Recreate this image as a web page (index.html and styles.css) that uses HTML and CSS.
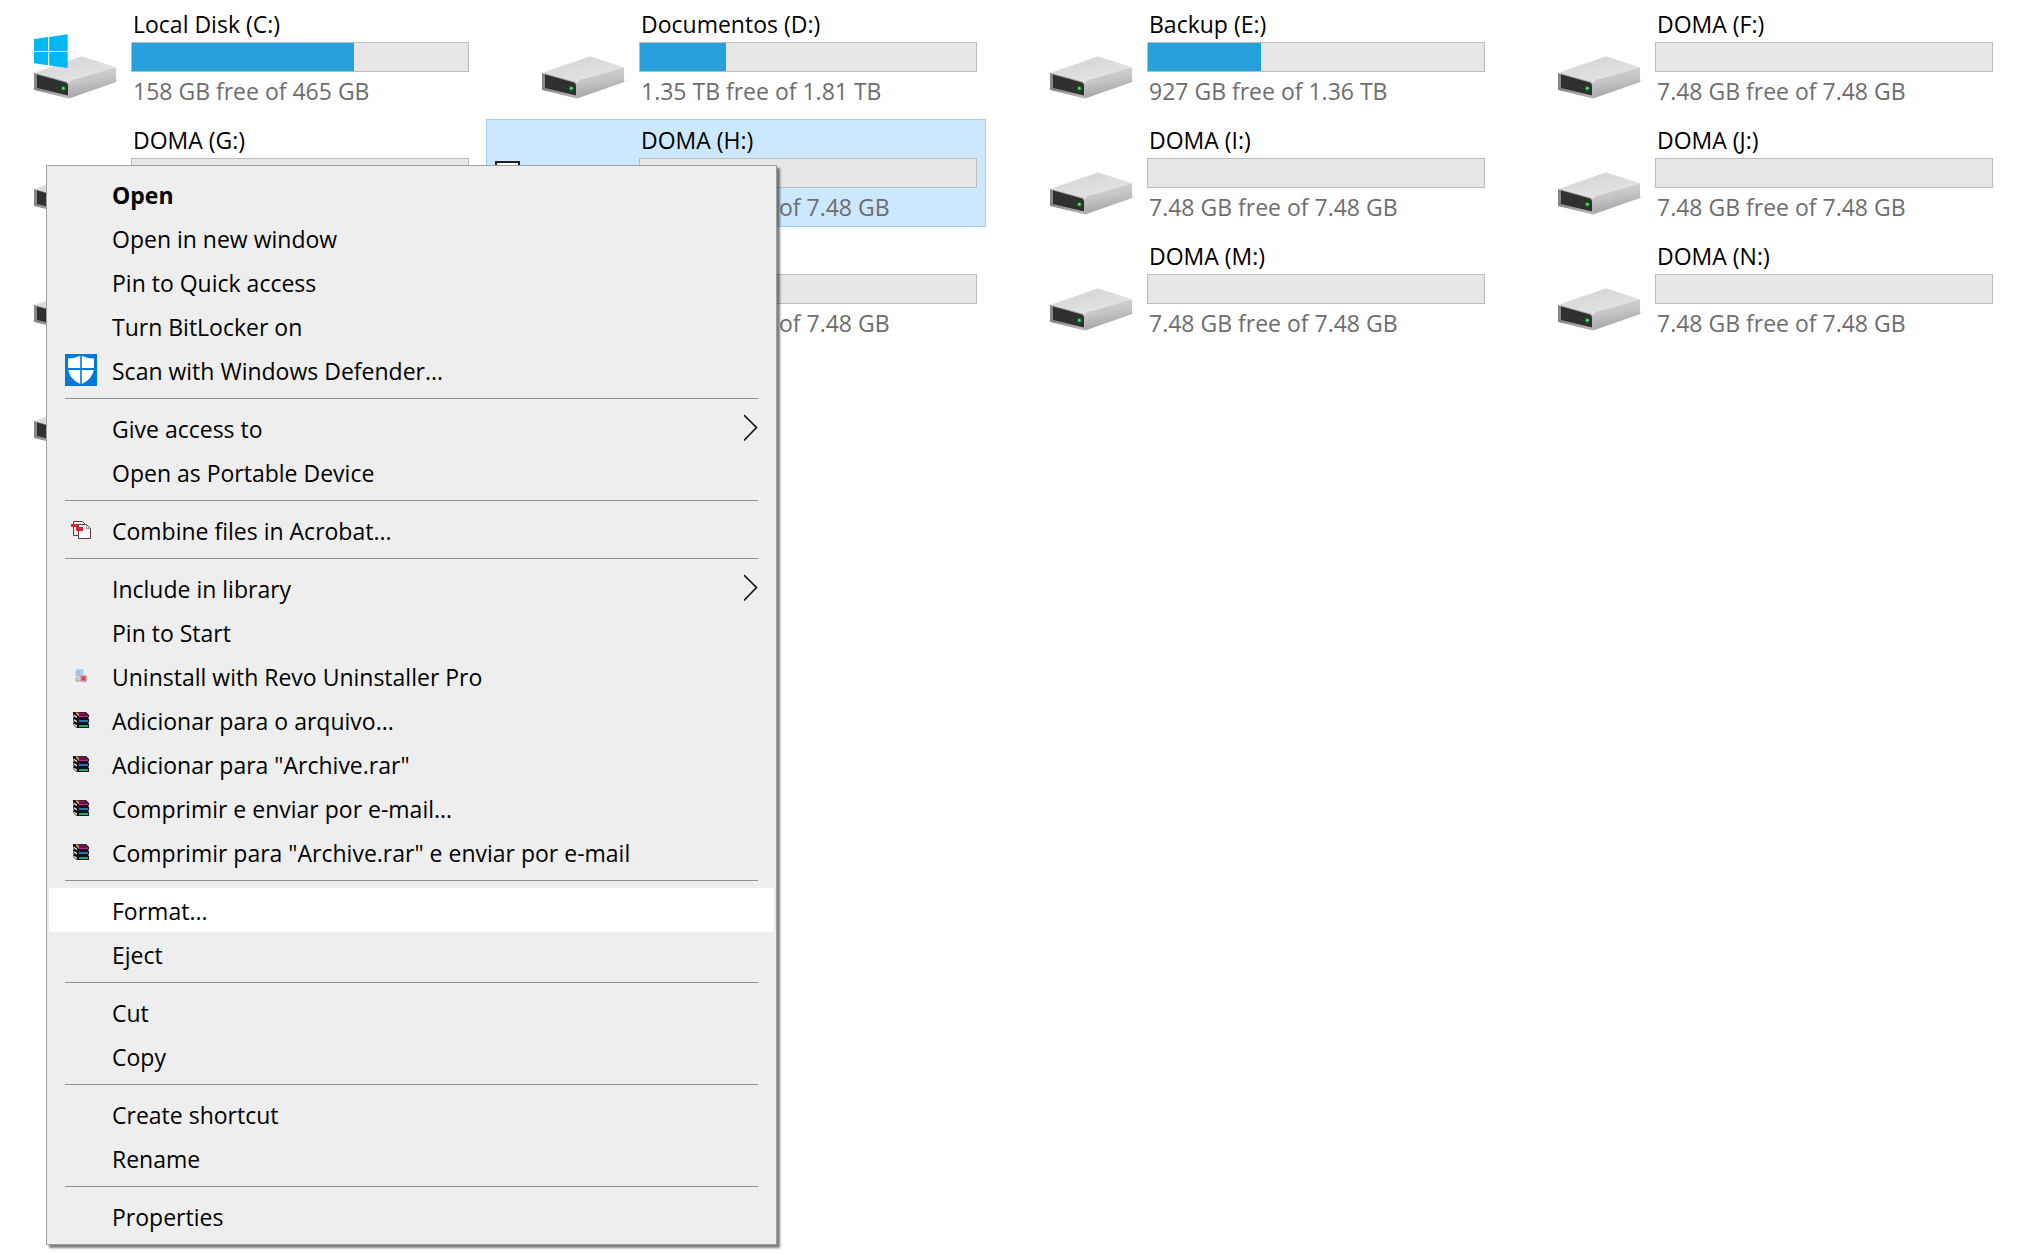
FILE: index.html
```html
<!DOCTYPE html>
<html lang="en">
<head>
<meta charset="utf-8">
<title>This PC</title>
<link rel="stylesheet" href="styles.css">
</head>
<body>
<svg class="defs" aria-hidden="true">
  <defs>
    <linearGradient id="top-face" x1="0" y1="0" x2="0.6" y2="1">
      <stop offset="0" stop-color="#d2d2d5"/><stop offset="1" stop-color="#e6e6e9"/>
    </linearGradient>
    <linearGradient id="side-face" x1="0" y1="0" x2="0.25" y2="1">
      <stop offset="0" stop-color="#dadadd"/><stop offset="0.5" stop-color="#c4c4c7"/><stop offset="1" stop-color="#a3a3a6"/>
    </linearGradient>
    <linearGradient id="front-face" x1="0" y1="0" x2="1" y2="0">
      <stop offset="0" stop-color="#858585"/><stop offset="1" stop-color="#b9b9bb"/>
    </linearGradient>
    <symbol id="drive" viewBox="0 0 88 88">
      <path d="M38 85 84 69 88 68 84 66z" fill="#ececec"/>
      <path d="M2 60 48 44q2-1 4 0l31 10q1 1 1 2L40 73 36 69z" fill="url(#top-face)"/>
      <path d="M37 70Q39 66 44 66L84 54.500V69L37 85.500z" fill="url(#side-face)"/>
      <path d="M2 60 35 68.500q2 1 2 3V85.500L2 77z" fill="url(#front-face)"/>
      <path d="M5 61.500 34 69.500q2 1 2 3V82.500L5 75z" fill="#303030"/>
      <circle cx="31.300" cy="75.300" r="2.600" fill="#176c22"/>
      <circle cx="31.300" cy="75.300" r="1.300" fill="#5cf06c"/>
    </symbol>
    <symbol id="windows" viewBox="0 0 88 88">
      <path fill="#00b8f1" d="M2 26 16.100 24V37.900H2zM17.200 23.900 35.700 21.300V37.900H17.200zM2 38.900H16.100V52.300L2 50.300zM17.200 38.900H35.700V55L17.200 52.400z"/>
    </symbol>
    <symbol id="defender" viewBox="0 0 32 32">
      <path fill="#0078d7" d="M0 0h32v32H0z"/>
      <path fill="#fff" d="M3 4.500Q10 4.500 15.200 1.800V14H3zM16.800 1.800Q22 4.500 29 4.500V14H16.800zM3.200 16H15.200V30Q5 25.500 3.200 16zM16.800 16H28.800Q27 25.500 16.800 30z"/>
    </symbol>
    <symbol id="combine" viewBox="0 0 32 32">
      <path d="M8.500 7.500h9l3 3V21.500h-12z" fill="#f4f0f0" stroke="#553e40"/>
      <path d="M13.500 10.500h8l4 4V24.500h-12z" fill="#faf8f8" stroke="#553e40"/>
      <path d="M21.500 10.500v4h4" fill="none" stroke="#9a8a8a"/>
      <path d="M6 10h7v3H6zM11 13h7v4h-7z" fill="#d9252e"/>
    </symbol>
    <symbol id="revo" viewBox="0 0 32 32">
      <path d="M10 13h7l1 8-7 1z" fill="#c9d3d6"/>
      <path d="M11 9h7l1 4-8 3z" fill="#b3caf2"/>
      <path d="M10 12h5M12 15h6" stroke="#8fa9e4"/>
      <path d="M11 18v3h5" fill="none" stroke="#a0a8a4"/>
      <circle cx="18.500" cy="18.500" r="3.800" fill="#dda0a4"/>
      <path d="m16.500 16.500 4 4m0-4-4 4" stroke="#c93540" stroke-width="1.500"/>
    </symbol>
    <symbol id="rar" viewBox="0 0 32 32">
      <path d="M8 8h13l3 3v2l-1 1 1 1v3l-1 1 1 1v4H12l-4-3v-2l1-1-1-1v-3l1-1-1-1z" fill="#16101a"/>
      <path d="M11 8.500h9l2 2h-9z" fill="#8e1c50"/>
      <path d="M14 11.500h9v1.500h-9z" fill="#d2218d"/>
      <path d="M14 16h9v2h-9z" fill="#2473ae"/>
      <path d="M14 21h9v2h-9z" fill="#16a673"/>
      <path d="M8.500 10.500l3.500 2v1.500l-3.500-2zM8.500 15l3.500 2v1.500l-3.500-2zM8.500 19.500l3.500 2v1.500l-3.500-2z" fill="#f3ead8"/>
      <path d="M10.500 8.500h2l1.500 2v2l-2-1.500z" fill="#d9a25a"/>
    </symbol>
    <symbol id="chevron" viewBox="0 0 14 28">
      <path d="M0 1 12.500 13.500 0 26.500" fill="none" stroke="#111" stroke-width="1.600"/>
    </symbol>
  </defs>
</svg>

<main>
  <ul class="drives">
    <li class="drive">
      <svg class="drive-icon" aria-hidden="true"><use href="#drive"/><use href="#windows"/></svg>
      <div class="info"><span class="name">Local Disk (C:)</span><progress class="usage" aria-label="Space used on C:" max="100" value="66"></progress><span class="free">158 GB free of 465 GB</span></div>
    </li>
    <li class="drive">
      <svg class="drive-icon" aria-hidden="true"><use href="#drive"/></svg>
      <div class="info"><span class="name">Documentos (D:)</span><progress class="usage" aria-label="Space used on D:" max="1000" value="255"></progress><span class="free">1.35 TB free of 1.81 TB</span></div>
    </li>
    <li class="drive">
      <svg class="drive-icon" aria-hidden="true"><use href="#drive"/></svg>
      <div class="info"><span class="name">Backup (E:)</span><progress class="usage" aria-label="Space used on E:" max="1000" value="335"></progress><span class="free">927 GB free of 1.36 TB</span></div>
    </li>
    <li class="drive">
      <svg class="drive-icon" aria-hidden="true"><use href="#drive"/></svg>
      <div class="info"><span class="name">DOMA (F:)</span><progress class="usage" aria-label="Space used on F:" max="100" value="0"></progress><span class="free">7.48 GB free of 7.48 GB</span></div>
    </li>
    <li class="drive">
      <svg class="drive-icon" aria-hidden="true"><use href="#drive"/></svg>
      <div class="info"><span class="name">DOMA (G:)</span><progress class="usage" aria-label="Space used on G:" max="100" value="0"></progress><span class="free">7.48 GB free of 7.48 GB</span></div>
    </li>
    <li class="drive selected">
      <input class="check" type="checkbox" aria-label="Select DOMA (H:)" checked>
      <svg class="drive-icon" aria-hidden="true"><use href="#drive"/></svg>
      <div class="info"><span class="name">DOMA (H:)</span><progress class="usage" aria-label="Space used on H:" max="100" value="0"></progress><span class="free">7.48 GB free of 7.48 GB</span></div>
    </li>
    <li class="drive">
      <svg class="drive-icon" aria-hidden="true"><use href="#drive"/></svg>
      <div class="info"><span class="name">DOMA (I:)</span><progress class="usage" aria-label="Space used on I:" max="100" value="0"></progress><span class="free">7.48 GB free of 7.48 GB</span></div>
    </li>
    <li class="drive">
      <svg class="drive-icon" aria-hidden="true"><use href="#drive"/></svg>
      <div class="info"><span class="name">DOMA (J:)</span><progress class="usage" aria-label="Space used on J:" max="100" value="0"></progress><span class="free">7.48 GB free of 7.48 GB</span></div>
    </li>
    <li class="drive">
      <svg class="drive-icon" aria-hidden="true"><use href="#drive"/></svg>
      <div class="info"><span class="name">DOMA (K:)</span><progress class="usage" aria-label="Space used on K:" max="100" value="0"></progress><span class="free">7.48 GB free of 7.48 GB</span></div>
    </li>
    <li class="drive">
      <svg class="drive-icon" aria-hidden="true"><use href="#drive"/></svg>
      <div class="info"><span class="name">DOMA (L:)</span><progress class="usage" aria-label="Space used on L:" max="100" value="0"></progress><span class="free">7.48 GB free of 7.48 GB</span></div>
    </li>
    <li class="drive">
      <svg class="drive-icon" aria-hidden="true"><use href="#drive"/></svg>
      <div class="info"><span class="name">DOMA (M:)</span><progress class="usage" aria-label="Space used on M:" max="100" value="0"></progress><span class="free">7.48 GB free of 7.48 GB</span></div>
    </li>
    <li class="drive">
      <svg class="drive-icon" aria-hidden="true"><use href="#drive"/></svg>
      <div class="info"><span class="name">DOMA (N:)</span><progress class="usage" aria-label="Space used on N:" max="100" value="0"></progress><span class="free">7.48 GB free of 7.48 GB</span></div>
    </li>
    <li class="drive">
      <svg class="drive-icon" aria-hidden="true"><use href="#drive"/></svg>
      <div class="info"><span class="name">DOMA (O:)</span><progress class="usage" aria-label="Space used on O:" max="100" value="0"></progress><span class="free">7.48 GB free of 7.48 GB</span></div>
    </li>
  </ul>
</main>

<div class="menu" role="menu">
  <button class="item default" role="menuitem"><span class="label">Open</span></button>
  <button class="item" role="menuitem"><span class="label">Open in new window</span></button>
  <button class="item" role="menuitem"><span class="label">Pin to Quick access</span></button>
  <button class="item" role="menuitem"><span class="label">Turn BitLocker on</span></button>
  <button class="item" role="menuitem"><svg class="icon" aria-hidden="true"><use href="#defender"/></svg><span class="label">Scan with Windows Defender...</span></button>
  <hr class="separator">
  <button class="item" role="menuitem" aria-haspopup="true"><span class="label">Give access to</span><svg class="chevron" aria-hidden="true"><use href="#chevron"/></svg></button>
  <button class="item" role="menuitem"><span class="label">Open as Portable Device</span></button>
  <hr class="separator">
  <button class="item" role="menuitem"><svg class="icon" aria-hidden="true"><use href="#combine"/></svg><span class="label">Combine files in Acrobat...</span></button>
  <hr class="separator">
  <button class="item" role="menuitem" aria-haspopup="true"><span class="label">Include in library</span><svg class="chevron" aria-hidden="true"><use href="#chevron"/></svg></button>
  <button class="item" role="menuitem"><span class="label">Pin to Start</span></button>
  <button class="item" role="menuitem"><svg class="icon" aria-hidden="true"><use href="#revo"/></svg><span class="label">Uninstall with Revo Uninstaller Pro</span></button>
  <button class="item" role="menuitem"><svg class="icon" aria-hidden="true"><use href="#rar"/></svg><span class="label">Adicionar para o arquivo...</span></button>
  <button class="item" role="menuitem"><svg class="icon" aria-hidden="true"><use href="#rar"/></svg><span class="label">Adicionar para "Archive.rar"</span></button>
  <button class="item" role="menuitem"><svg class="icon" aria-hidden="true"><use href="#rar"/></svg><span class="label">Comprimir e enviar por e-mail...</span></button>
  <button class="item" role="menuitem"><svg class="icon" aria-hidden="true"><use href="#rar"/></svg><span class="label">Comprimir para "Archive.rar" e enviar por e-mail</span></button>
  <hr class="separator">
  <button class="item active" role="menuitem"><span class="label">Format...</span></button>
  <button class="item" role="menuitem"><span class="label">Eject</span></button>
  <hr class="separator">
  <button class="item" role="menuitem"><span class="label">Cut</span></button>
  <button class="item" role="menuitem"><span class="label">Copy</span></button>
  <hr class="separator">
  <button class="item" role="menuitem"><span class="label">Create shortcut</span></button>
  <button class="item" role="menuitem"><span class="label">Rename</span></button>
  <hr class="separator">
  <button class="item" role="menuitem"><span class="label">Properties</span></button>
</div>
</body>
</html>
```
FILE: styles.css
```css
* {
  box-sizing: border-box;
}

body {
  margin: 0;
  overflow-x: hidden;
  background: #fff;
  color: #000;
  font: 23px/32px "Segoe UI", "Open Sans", "Noto Sans", sans-serif;
}

.defs {
  position: absolute;
  width: 0;
  height: 0;
}

/* Drive tiles */
.drives {
  display: grid;
  grid-template-columns: repeat(auto-fill, 500px);
  gap: 8px;
  margin: 0 0 0 -22px;
  padding: 3px 0;
  list-style: none;
}

.drive {
  display: grid;
  grid-template-columns: 34px 88px 1fr;
  column-gap: 11px;
  align-items: center;
  height: 108px;
  padding: 0 8px;
  border: 1px solid transparent;
}

.drive.selected {
  border-color: #99d1ff;
  background: #cce8ff;
}

.check {
  grid-column: 1;
  grid-row: 1;
  appearance: none;
  width: 25px;
  height: 25px;
  margin: 0;
  border: 2px solid #222;
  background: #fff;
}

.drive-icon {
  grid-column: 2;
  grid-row: 1;
  width: 88px;
  height: 88px;
}

.info {
  grid-column: 3;
  grid-row: 1;
  align-self: start;
  display: flex;
  flex-direction: column;
  gap: 2px;
  padding-top: 4px;
}

.name,
.free {
  padding-left: 2px;
  white-space: nowrap;
}

.free {
  color: #6d6d6d;
  line-height: 34px;
}

.usage {
  appearance: none;
  display: block;
  width: 100%;
  height: 30px;
  border: 1px solid #bcbcbc;
  background: #e6e6e6;
}

.usage::-webkit-progress-bar {
  background: #e6e6e6;
}

.usage::-webkit-progress-value {
  background: #26a0da;
}

/* Context menu */
.menu {
  position: absolute;
  top: 165px;
  left: 46px;
  width: 731px;
  padding: 6px 2px;
  border: 1px solid #a0a0a0;
  background: #eee;
  box-shadow: 3px 3px 2px rgba(0, 0, 0, 0.5);
}

.item {
  display: grid;
  grid-template-columns: 32px 1fr 14px;
  column-gap: 15px;
  align-items: center;
  width: 100%;
  height: 44px;
  padding: 0 16px;
  border: 0;
  background: none;
  color: inherit;
  font: inherit;
  text-align: left;
}

.item.default {
  font-weight: 700;
}

.item.active {
  background: #fff;
}

.icon {
  grid-column: 1;
  grid-row: 1;
  width: 32px;
  height: 32px;
}

.label {
  grid-column: 2;
  grid-row: 1;
  padding-top: 2px;
  white-space: nowrap;
}

.chevron {
  grid-column: 3;
  grid-row: 1;
  width: 14px;
  height: 28px;
}

.separator {
  height: 1px;
  margin: 6px 16px 7px;
  border: 0;
  background: #919191;
}
```
